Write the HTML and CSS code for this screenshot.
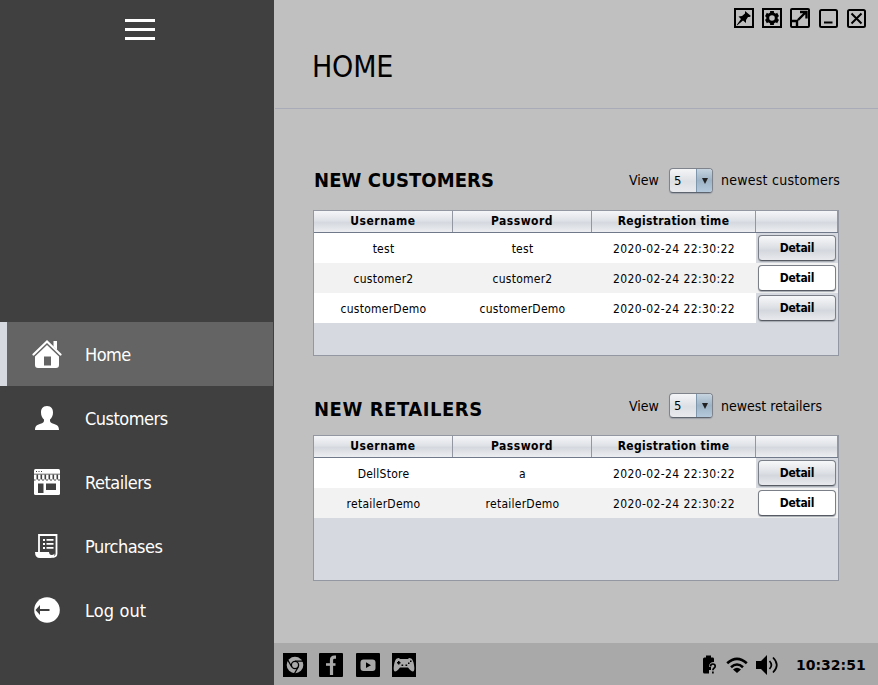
FILE: index.html
```html
<!DOCTYPE html>
<html lang="en">
<head>
<meta charset="utf-8">
<title>Home</title>
<link rel="stylesheet" href="styles.css">
</head>
<body>
<div class="app">
  <aside class="sidebar">
    <div class="burger"><i></i><i></i><i></i></div>
    <nav class="menu">
      <a class="item active"><svg width="30" height="30" viewBox="0 0 30 30"><path d="M1.5 15.5 15 2.5l13.500 13" fill="none" stroke="#fff" stroke-width="2.200" stroke-linecap="round"/><path d="M21.500 7.500V2h3.500v9z" fill="#fff"/><path fill="#fff" fill-rule="evenodd" d="M15 6 27 17.500V26q0 3-3 3H6q-3 0-3-3v-8.500zM12 17.500v9h7v-9z"/></svg><span class="t-home">Home</span></a>
      <a class="item"><svg width="30" height="30" viewBox="0 0 30 30"><path fill="#fff" d="M15 3c4.500 0 6 3 6 6.500 0 3-1.200 5.500-3 7 0 2 0 3 2 3.700C24 21.500 27 22 27 27H3c0-5 3-5.500 7-6.800 2-.7 2-1.700 2-3.700-1.800-1.500-3-4-3-7C9 6 10.500 3 15 3z"/></svg><span class="t-customers">Customers</span></a>
      <a class="item"><svg width="30" height="30" viewBox="0 0 30 30"><rect x="2" y="2" width="26" height="26" rx="1.500" fill="#fff"/><g fill="#404040"><path d="M4 4h1v1H4zm2.500 0h1v1h-1zM9 4h1v1H9zM2 6.800h26v.6H2z"/><path d="M4.500 7.500h1.600v5H4.500zm4 0h1.600v5H8.500zm4 0h1.600v5h-1.600zm4 0h1.600v5h-1.600zm4 0h1.600v5h-1.600zm4 0h1.600v5h-1.600z"/><path d="M2 12.600h1.600v1H2zm4 0h2v1H6zm4 0h2v1h-2zm4 0h2v1h-2zm4 0h2v1h-2zm4 0h2v1h-2zm4 0h2v1h-2z"/><path d="M6 16.500h5.500V26H6zm8 0h10V23H14z"/></g></svg><span class="t-retailers">Retailers</span></a>
      <a class="item"><svg width="30" height="30" viewBox="0 0 30 30"><path fill="none" stroke="#fff" stroke-width="1.800" d="M7 22V4h17.500v18.500q0 3.500-4 3.500"/><path fill="#fff" d="M3 21h14q.3 3 2.500 3 2 0 3-1.500 0 4.500-4 4.500H8q-5 0-5-6z"/><path fill="#fff" d="M11 8h2v2h-2zm0 4h2v2h-2zm0 4h2v2h-2zM14.500 8h7v1.800h-7zm0 4h7v1.800h-7zm0 4h7v1.800h-7z"/></svg><span class="t-purchases">Purchases</span></a>
      <a class="item"><svg width="30" height="30" viewBox="0 0 30 30"><circle cx="15" cy="15" r="12.800" fill="#fff"/><path fill="#404040" d="M3.500 15 8 10v4h9.500v2H8v4z"/></svg><span class="t-logout">Log out</span></a>
    </nav>
  </aside>
  <main class="main">
    <header class="top">
      <div class="controls">
        <svg width="20" height="20" viewBox="0 0 20 20"><path fill="none" stroke="#000" stroke-width="2" d="M1 1h18v18H1z"/><path d="m11 3 6 5-1.500 1-1.500 0-2 3 0 3-3-2.500L3 17.500 2.700 17 7 11 4.500 8.500 8 8l3-2.500z"/></svg>
        <svg width="20" height="20" viewBox="0 0 20 20"><path fill="none" stroke="#000" stroke-width="2" d="M1 1h18v18H1z"/><circle cx="10" cy="10" r="4.300" fill="none" stroke="#000" stroke-width="3"/><path fill="none" stroke="#000" stroke-width="3.800" d="M10 3v2.500M10 14.500V17M3.900 6.500l2 1.100M14.100 12.400l2 1.100M3.900 13.500l2-1.100M14.100 7.600l2-1.100"/></svg>
        <svg width="20" height="20" viewBox="0 0 20 20"><rect x="1" y="1" width="18" height="18" rx="1" fill="none" stroke="#000" stroke-width="2"/><path fill="none" stroke="#000" stroke-width="2.400" d="M1 13h6v6M8 12l8-8M10 4h6.500v6.500"/></svg>
        <svg width="20" height="20" viewBox="0 0 20 20"><rect x="2" y="2" width="17" height="17" rx="1.500" fill="none" stroke="#000" stroke-width="2"/><path stroke="#000" stroke-width="2" d="M6 14.500h8.500"/></svg>
        <svg width="20" height="20" viewBox="0 0 20 20"><rect x="2" y="2" width="17" height="17" rx="1.500" fill="none" stroke="#000" stroke-width="2"/><path stroke="#000" stroke-width="2" d="m5.500 5.500 10 10m0-10-10 10"/></svg>
      </div>
      <h1><span>HOME</span></h1>
    </header>
    <div class="content">
      <section class="panel">
        <div class="head">
          <h2 class="h-cust">NEW CUSTOMERS</h2>
          <div class="view"><span class="t-view">View</span><span class="combo"><b>5</b><i></i></span><span class="t-nc">newest customers</span></div>
        </div>
        <div class="table">
          <div class="row th"><span class="c-user">Username</span><span class="c-pass">Password</span><span class="c-reg">Registration time</span><span></span></div>
          <div class="row"><span>test</span><span>test</span><span class="date">2020-02-24 22:30:22</span><span><button>Detail</button></span></div>
          <div class="row alt"><span>customer2</span><span>customer2</span><span class="date">2020-02-24 22:30:22</span><span><button>Detail</button></span></div>
          <div class="row"><span>customerDemo</span><span>customerDemo</span><span class="date">2020-02-24 22:30:22</span><span><button>Detail</button></span></div>
        </div>
      </section>
      <section class="panel second">
        <div class="head">
          <h2 class="h-ret">NEW RETAILERS</h2>
          <div class="view"><span class="t-view">View</span><span class="combo"><b>5</b><i></i></span><span class="t-nr">newest retailers</span></div>
        </div>
        <div class="table">
          <div class="row th"><span class="c-user">Username</span><span class="c-pass">Password</span><span class="c-reg">Registration time</span><span></span></div>
          <div class="row"><span>DellStore</span><span>a</span><span class="date">2020-02-24 22:30:22</span><span><button>Detail</button></span></div>
          <div class="row alt"><span>retailerDemo</span><span>retailerDemo</span><span class="date">2020-02-24 22:30:22</span><span><button>Detail</button></span></div>
        </div>
      </section>
    </div>
    <footer class="bar">
      <div class="apps">
        <svg width="24" height="24" viewBox="0 0 24 24"><path d="M0 0h24v24H0z"/><circle cx="12" cy="12" r="8.300" fill="#a9a9a9"/><circle cx="12" cy="12" r="3.600" fill="#a9a9a9" stroke="#000" stroke-width="1.300"/><path fill="none" stroke="#000" stroke-width="1.300" d="M12 8.200h8M8.800 14 4.800 7M15.200 14l-4 7"/></svg>
        <svg width="24" height="24" viewBox="0 0 24 24"><rect width="24" height="24" rx="1"/><path fill="none" stroke="#a9a9a9" stroke-width="3.200" d="M17 4.200h-1.500q-3 0-3 3V22"/><path stroke="#a9a9a9" stroke-width="2.600" d="M7 11.500h9.500"/></svg>
        <svg width="24" height="24" viewBox="0 0 24 24"><rect width="24" height="24" rx="1"/><rect x="4.500" y="6.500" width="15" height="11.500" rx="3" fill="#a9a9a9"/><path d="m10 9.300 5 2.900-5 2.900z"/></svg>
        <svg width="24" height="24" viewBox="0 0 24 24"><path d="M0 0h24v24H0z"/><path fill="#a9a9a9" d="M5 5.500q2-1 3 .5h8q1-1.500 3-.5 2 .5 3 6.500 1 6-1 6.500-2 0-5-4H8q-3 4-5 4-2-.5-1-6.500 1-6 3-6.500z"/><path d="M5 9h1V8h1.500v1h1v1.500h-1v1H6v-1H5zm11 .500h1.500V11H16zm2-2h1.500V9H18zm-8.500 4h1.700V13H9.500zm4 0h1.700V13h-1.700z"/></svg>
      </div>
      <div class="status">
        <svg width="16" height="20" viewBox="0 0 16 20"><path d="M1 4q0-1.500 1.500-1.500H4V.500h5v2h2q1 0 1 1.500v3q-5 0-5 5h2v3H7v3.500H2.500Q1 18.500 1 17z"/><path fill="none" stroke="#000" stroke-width="1.700" d="M8.500 11.500q0-2.500 2.300-2.500 2.400 0 2.400 2.200 0 1.200-1.300 2-1 .7-1 2M10.900 16.500v2"/></svg>
        <svg width="22" height="18" viewBox="0 0 22 18"><path fill="none" stroke="#000" stroke-width="2.600" d="M1.200 7.200q9.800-8.800 19.600 0M5 11.200q6-5.400 12 0"/><path d="m11 17-4-3.600q4-3.400 8 0z"/></svg>
        <svg width="23" height="20" viewBox="0 0 23 20"><path d="M0 6h5l6-6v20l-6-6H0z"/><path fill="none" stroke="#000" stroke-width="1.700" d="M13.500 6q3.800 4 0 8M17 2.500q7.500 7.500 0 15"/></svg>
      </div>
      <span class="clock">10:32:51</span>
    </footer>
  </main>
</div>
</body>
</html>
```
FILE: styles.css
```css
* { box-sizing: border-box; }
body { margin: 0; font-family: "DejaVu Sans Condensed", "DejaVu Sans", sans-serif; font-stretch: condensed; color: #000; overflow: hidden; }
svg { display: block; flex: none; }
span { white-space: nowrap; }
.app { display: flex; width: 878px; height: 685px; }

.sidebar { width: 274px; background: #404040; flex: none; padding-top: 19px; }
.burger { margin-left: 125px; width: 30px; height: 303px; display: flex; flex-direction: column; gap: 6px; }
.burger i { height: 3px; background: #fff; }
.item { height: 64px; width: 273px; display: flex; align-items: center; padding-left: 32px; gap: 23px; color: #fff; font-size: 18px; }
.item.active { background: #646464; border-left: 7px solid #d6d9df; padding-left: 25px; }
.item span { letter-spacing: -0.5px; }
.item .t-logout { letter-spacing: 0.1px; }

.main { flex: 1; background: #c0c0c0; display: flex; flex-direction: column; }
.top { height: 109px; margin-left: 1px; border-bottom: 1px solid #a9acb8; padding: 8px 12px 0 37px; }
.controls { display: flex; justify-content: flex-end; gap: 8px; height: 38px; }
h1 { margin: 0; font-size: 30px; line-height: 41px; font-weight: 400; letter-spacing: -0.200px; }

.content { flex: 1; padding: 58px 39px 0; }
.panel { height: 225px; }
.head { height: 43px; display: flex; justify-content: space-between; }
h2 { margin: 0 0 0 1px; font-size: 20px; line-height: 26px; font-weight: 700; white-space: nowrap; }
.h-cust { letter-spacing: 0.100px; }
.h-ret { letter-spacing: 0.550px; }
.second h2 { padding-top: 4px; }
.view { display: flex; width: 210px; font-size: 14px; line-height: 26px; height: 26px; flex: none; }
.second .view { margin-top: 1px; }
.t-view { width: 40px; flex: none; }
.t-nc { letter-spacing: 0.250px; }
.combo { flex: none; width: 44px; height: 25px; margin: 1px 8px 0 0; border: 1px solid #7f848c; border-bottom-color: #5d646e; border-radius: 4px; display: flex; background: linear-gradient(#f4f5f7, #dcdfe4 55%, #e8eaee); box-shadow: 0 1px 1px #9da1a8; overflow: hidden; }
.second .combo { margin-top: 0; }
.combo b { width: 26px; font: 13px/24px "DejaVu Sans Condensed", sans-serif; padding-left: 4px; }
.combo i { flex: 1; display: flex; align-items: center; justify-content: center; background: linear-gradient(#c6d4df, #9db3c6 50%, #b4c9dc); border-left: 1px solid #7e97ad; }
.combo i::before { content: ""; border: 3.500px solid transparent; border-top: 6px solid #222; border-bottom: 0; }

.table { width: 526px; height: 146px; border: 1px solid #9297a1; background: #d6d9df; font-size: 12px; }
.row { display: grid; grid-template-columns: 139px 139px 164px 82px; height: 30px; line-height: 32px; text-align: center; letter-spacing: 0.250px; }
.row > span { background: #fff; height: 30px; }
.row > .date { letter-spacing: 0.400px; }
.row > span:last-child { background: #d6d9df; padding: 2px; }
.row.alt > span { background: #f2f2f2; }
.row.th { height: 22px; line-height: 21px; font-weight: 700; letter-spacing: 0.500px; border-bottom: 1px solid #70798a; background: linear-gradient(#f5f6f8, #dfe2e7 45%, #d5d8de 55%, #eceef1); }
.row.th > span { height: 21px; background: none; padding: 0; border-right: 1px solid #9297a1; }
.row.th > .c-reg { letter-spacing: 0.300px; }
button { display: block; width: 78px; height: 26px; padding: 0; border: 1px solid #7b7f87; border-bottom-color: #565b64; border-radius: 4px; background: linear-gradient(#f7f8f9, #dcdfe4 50%, #d4d7dd 60%, #e7e9ed); font: 700 12px/23px "DejaVu Sans Condensed", sans-serif; letter-spacing: -0.300px; color: #000; box-shadow: 0 1px 1px #a4a8b0; }
.alt button { background: #fff; }

.bar { height: 42px; background: #a9a9a9; display: flex; align-items: center; padding: 2px 12px 0 9px; }
.apps { display: flex; gap: 12.400px; }
.status { display: flex; align-items: center; gap: 8px; margin-left: auto; margin-right: 17px; }
.clock { font-family: "DejaVu Sans", sans-serif; font-stretch: normal; font-size: 14px; font-weight: 700; width: 70px; }
```
